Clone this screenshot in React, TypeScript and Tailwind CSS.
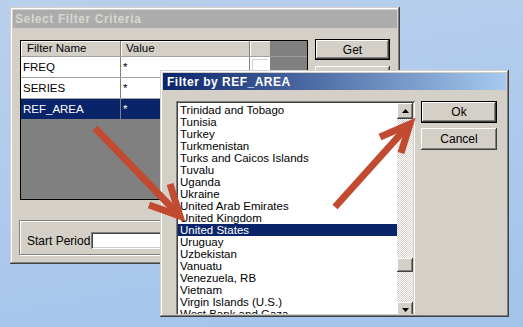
import React from 'react';

const raised =
  'shadow-[inset_-1px_-1px_#404040,inset_1px_1px_#ffffff,inset_-2px_-2px_#808080,inset_2px_2px_#d4d0c8]';
const frame =
  'shadow-[inset_-1px_-1px_#404040,inset_1px_1px_#d4d0c8,inset_-2px_-2px_#808080,inset_2px_2px_#ffffff]';
const sunken =
  'shadow-[inset_1px_1px_#808080,inset_-1px_-1px_#ffffff,inset_2px_2px_#404040,inset_-2px_-2px_#d4d0c8]';

const countries = [
  'Trinidad and Tobago',
  'Tunisia',
  'Turkey',
  'Turkmenistan',
  'Turks and Caicos Islands',
  'Tuvalu',
  'Uganda',
  'Ukraine',
  'United Arab Emirates',
  'United Kingdom',
  'United States',
  'Uruguay',
  'Uzbekistan',
  'Vanuatu',
  'Venezuela, RB',
  'Vietnam',
  'Virgin Islands (U.S.)',
  'West Bank and Gaza',
];

const filters = [
  { name: 'FREQ', value: '*' },
  { name: 'SERIES', value: '*' },
  { name: 'REF_AREA', value: '*', selected: true },
];

const Button: React.FC<{ label: string; isDefault?: boolean; className?: string }> = ({
  label,
  isDefault,
  className = '',
}) => (
  <div className={`${isDefault ? 'border border-black' : ''} ${className}`}>
    <div className={`h-full w-full bg-[#d4d0c8] ${raised} flex items-center justify-center text-[12px] text-black`}>
      {label}
    </div>
  </div>
);

const Arrow: React.FC<{ up?: boolean }> = ({ up }) => (
  <svg width="7" height="4" viewBox="0 0 7 4">
    <polygon points={up ? '3.5,0 7,4 0,4' : '0,0 7,0 3.5,4'} fill="#000" />
  </svg>
);

const BackWindow: React.FC = () => (
  <div className={`absolute left-[10px] top-[7px] w-[390px] h-[257px] bg-[#d4d0c8] ${frame} p-[3px] flex flex-col`}>
    <div className="h-[18px] bg-[#acacac] flex items-center pl-[2px]">
      <span className="text-[12px] font-bold text-[#d8d6d0] tracking-[0.6px]">Select Filter Criteria</span>
    </div>
    <div className="flex flex-col pl-[7px] pt-[11px]">
      <div className="flex gap-[7px]">
        <div className="mt-[1px] w-[288px] h-[160px] border border-black bg-[#808080] flex flex-col">
          <div className="flex h-[15px] text-[11.5px] text-black">
            <div className="w-[100px] bg-[#d4d0c8] border-r border-[#808080] pl-[6px] leading-[15px] shadow-[inset_1px_1px_#ffffff]">
              Filter Name
            </div>
            <div className="w-[129px] bg-[#d4d0c8] border-r border-[#808080] pl-[5px] leading-[15px] shadow-[inset_1px_1px_#ffffff]">
              Value
            </div>
            <div className="w-[20px] bg-[#d4d0c8] shadow-[inset_1px_1px_#ffffff]" />
          </div>
          {filters.map((f) => (
            <div key={f.name} className="flex h-[21px] text-[11.5px] border-t border-[#a0a0a0]">
              <div
                className={`w-[100px] border-r border-[#808080] pl-[2px] leading-[20px] ${
                  f.selected ? 'bg-[#0a246a] text-white' : 'bg-white text-black'
                }`}
              >
                {f.name}
              </div>
              <div
                className={`w-[129px] border-r border-[#808080] pl-[2px] leading-[20px] ${
                  f.selected ? 'bg-[#0a246a] text-white' : 'bg-white text-black'
                }`}
              >
                {f.value}
              </div>
              <div className="w-[20px] bg-white p-[2px]">
                <div className="w-full h-full border-t border-l border-[#d4d0c8]" />
              </div>
            </div>
          ))}
        </div>
        <div className="flex flex-col gap-[6px]">
          <Button label="Get" isDefault className="w-[75px] h-[21px]" />
          <Button label="Set" className="w-[75px] h-[21px]" />
        </div>
      </div>
      <div className="mt-[20px] -ml-[1px] w-[370px] h-[35px] border border-[#808080] shadow-[inset_1px_1px_#ffffff,1px_1px_0_#ffffff] flex items-center pl-[7px] pt-[6px]">
        <span className="text-[12px] text-black">Start Period</span>
        <div className={`ml-[1px] w-[150px] h-[17px] bg-white ${sunken}`} />
      </div>
    </div>
  </div>
);

const FilterDialog: React.FC = () => (
  <div className={`absolute left-[160px] top-[70px] w-[349px] h-[247px] bg-[#d4d0c8] ${frame} p-[3px] flex flex-col overflow-hidden`}>
    <div className="h-[17px] shrink-0 bg-[linear-gradient(to_right,#0a246a,#a6caf0)] flex items-center pl-[4px]">
      <span className="text-[12px] font-bold text-white tracking-[0.5px]">Filter by REF_AREA</span>
    </div>
    <div className="flex pl-[13px] pt-[11px] gap-[6px] min-h-0 flex-1 overflow-hidden">
      <div className={`w-[239px] h-[222px] shrink-0 bg-white ${sunken} p-[2px] flex`}>
        <div className="w-[219px] flex flex-col pt-[1px]">
          {countries.map((c) => (
            <div
              key={c}
              className={`h-[12px] shrink-0 leading-[12px] pl-[2px] text-[11.5px] whitespace-nowrap ${
                c === 'United States' ? 'bg-[#0a246a] text-white' : 'text-black'
              }`}
            >
              {c}
            </div>
          ))}
        </div>
        <div className="w-[16px] flex flex-col bg-[repeating-conic-gradient(#d4d0c8_0_25%,#ffffff_0_50%)] bg-size-[2px_2px]">
          <div className={`h-[16px] shrink-0 bg-[#d4d0c8] ${raised} flex items-center justify-center`}>
            <Arrow up />
          </div>
          <div className="h-[183px] shrink-0">
            <div className={`mt-[139px] h-[14px] bg-[#d4d0c8] ${raised}`} />
          </div>
          <div className={`h-[16px] shrink-0 bg-[#d4d0c8] ${raised} flex items-center justify-center`}>
            <Arrow />
          </div>
        </div>
      </div>
      <div className="flex flex-col gap-[5px]">
        <Button label="Ok" isDefault className="w-[76px] h-[22px]" />
        <Button label="Cancel" className="w-[76px] h-[22px]" />
      </div>
    </div>
  </div>
);

export default function App() {
  return (
    <div className="relative w-[523px] h-[327px] overflow-hidden bg-[linear-gradient(170deg,#b9d0ec,#a3c3eb)] font-['Liberation_Sans',Arial,sans-serif]">
      <BackWindow />
      <FilterDialog />
      <svg className="absolute inset-0 pointer-events-none" width="523" height="327" viewBox="0 0 523 327">
        <g stroke="#c24a30" strokeWidth="7" fill="none" strokeLinejoin="miter" strokeLinecap="butt">
          <line x1="95" y1="128" x2="178" y2="214" />
          <polyline points="149,205 180,216 170,184" />
          <line x1="335" y1="207" x2="407" y2="127" />
          <polyline points="380,137 410,124 401,153" />
        </g>
      </svg>
    </div>
  );
}
